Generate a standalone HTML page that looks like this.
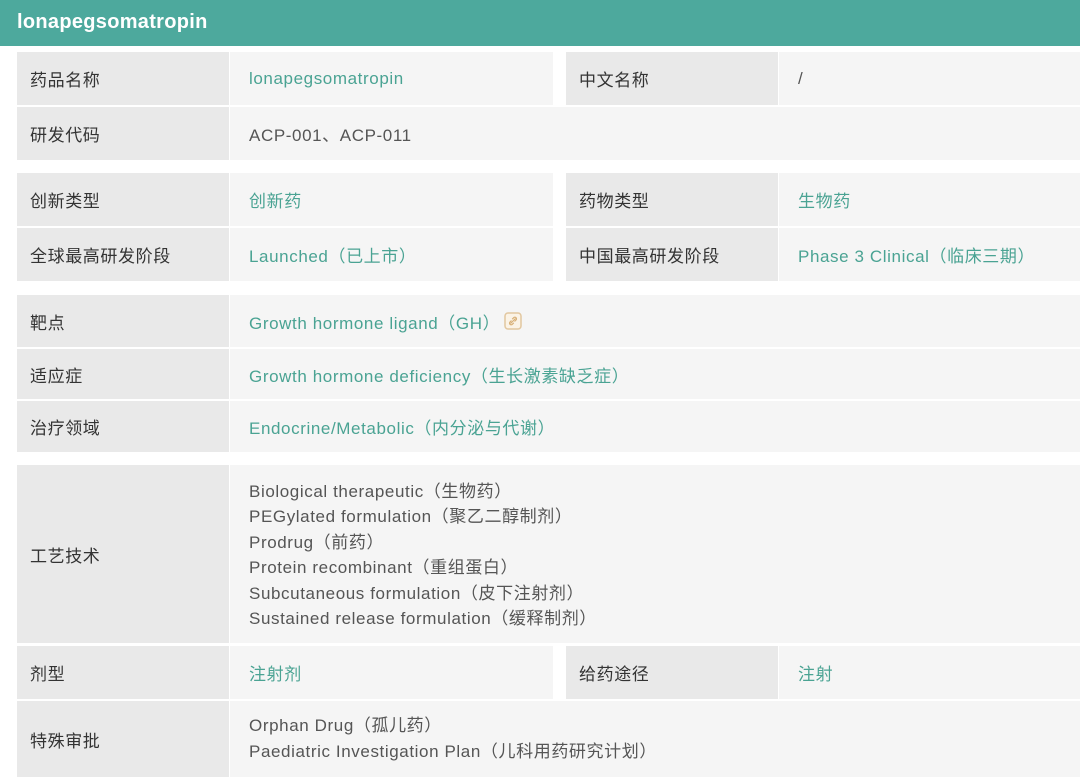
<!DOCTYPE html>
<html><head><meta charset="utf-8"><style>
body{margin:0;width:1080px;height:767px;overflow:hidden;background:#fff;font-family:"Liberation Sans","Noto Sans CJK SC",sans-serif;font-size:17px;color:#333;letter-spacing:0.6px}
.hd{position:absolute;left:0;top:0;width:1080px;height:46px;background:#4da99d;color:#fff;font-size:20px;font-weight:bold;line-height:44px;padding-left:17px;box-sizing:border-box;letter-spacing:0.3px}
.c{position:absolute;box-sizing:border-box;display:flex;align-items:center;padding-left:13px}
.l{background:#e9e9e9;color:#333}
.v{background:#f5f5f5;color:#555;padding-left:19px}
.g{color:#4aa393}
</style></head><body>
<div class="hd">lonapegsomatropin</div>

<div class="c l" style="left:17px;top:52px;width:212px;height:53px">药品名称</div>
<div class="c v g" style="left:230px;top:52px;width:323px;height:53px">lonapegsomatropin</div>
<div class="c l" style="left:566px;top:52px;width:212px;height:53px">中文名称</div>
<div class="c v" style="left:779px;top:52px;width:301px;height:53px">/</div>
<div class="c l" style="left:17px;top:107px;width:212px;height:53px">研发代码</div>
<div class="c v" style="left:230px;top:107px;width:850px;height:53px">ACP-001、ACP-011</div>

<div class="c l" style="left:17px;top:173px;width:212px;height:53px">创新类型</div>
<div class="c v g" style="left:230px;top:173px;width:323px;height:53px">创新药</div>
<div class="c l" style="left:566px;top:173px;width:212px;height:53px">药物类型</div>
<div class="c v g" style="left:779px;top:173px;width:301px;height:53px">生物药</div>
<div class="c l" style="left:17px;top:228px;width:212px;height:53px">全球最高研发阶段</div>
<div class="c v g" style="left:230px;top:228px;width:323px;height:53px">Launched（已上市）</div>
<div class="c l" style="left:566px;top:228px;width:212px;height:53px">中国最高研发阶段</div>
<div class="c v g" style="left:779px;top:228px;width:301px;height:53px">Phase 3 Clinical（临床三期）</div>

<div class="c l" style="left:17px;top:295px;width:212px;height:52px">靶点</div>
<div class="c v g" style="left:230px;top:295px;width:850px;height:52px">Growth hormone ligand（GH）<svg width="18" height="18" viewBox="0 0 18 18" style="margin-left:4px"><rect x="1" y="1" width="16" height="16" rx="3" fill="#fbf3e6" stroke="#e2c79f" stroke-width="1.5"/><path d="M6.5 11.5l5-5M7.5 8.5l-1.5 1.5a1.6 1.6 0 002.3 2.3l1.5-1.5M10.5 9.5l1.5-1.5a1.6 1.6 0 00-2.3-2.3L8.2 7.2" fill="none" stroke="#d8b078" stroke-width="1.2"/></svg></div>
<div class="c l" style="left:17px;top:349px;width:212px;height:50px">适应症</div>
<div class="c v g" style="left:230px;top:349px;width:850px;height:50px">Growth hormone deficiency（生长激素缺乏症）</div>
<div class="c l" style="left:17px;top:401px;width:212px;height:51px">治疗领域</div>
<div class="c v g" style="left:230px;top:401px;width:850px;height:51px">Endocrine/Metabolic（内分泌与代谢）</div>

<div class="c l" style="left:17px;top:465px;width:212px;height:178px">工艺技术</div>
<div class="c v" style="left:230px;top:465px;width:850px;height:178px;line-height:25.5px;padding-top:2px">Biological therapeutic（生物药）<br>PEGylated formulation（聚乙二醇制剂）<br>Prodrug（前药）<br>Protein recombinant（重组蛋白）<br>Subcutaneous formulation（皮下注射剂）<br>Sustained release formulation（缓释制剂）</div>
<div class="c l" style="left:17px;top:646px;width:212px;height:53px">剂型</div>
<div class="c v g" style="left:230px;top:646px;width:323px;height:53px">注射剂</div>
<div class="c l" style="left:566px;top:646px;width:212px;height:53px">给药途径</div>
<div class="c v g" style="left:779px;top:646px;width:301px;height:53px">注射</div>
<div class="c l" style="left:17px;top:701px;width:212px;height:76px">特殊审批</div>
<div class="c v" style="left:230px;top:701px;width:850px;height:76px;align-items:flex-start;padding-top:12px;line-height:25.5px">Orphan Drug（孤儿药）<br>Paediatric Investigation Plan（儿科用药研究计划）</div>
</body></html>
